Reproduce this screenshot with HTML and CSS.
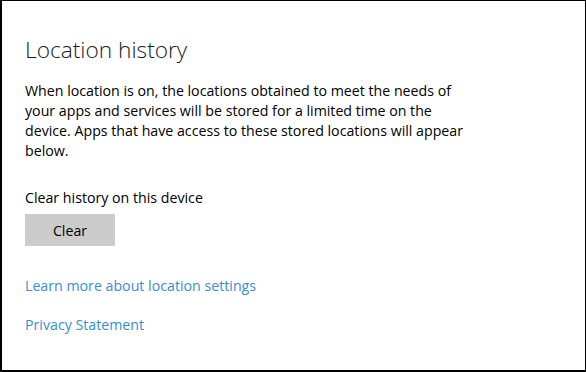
FILE: index.html
```html
<!DOCTYPE html>
<html>
<head>
<meta charset="utf-8">
<link rel="stylesheet" href="styles.css">
</head>
<body>
<div class="panel">
  <h1 class="title">Location history</h1>
  <p class="desc">When location is on, the locations obtained to meet the needs of<br>your apps and services will be stored for a limited time on the<br>device. Apps that have access to these stored locations will appear<br>below.</p>
  <div class="label">Clear history on this device</div>
  <button class="btn">Clear</button>
  <a class="link first" href="#">Learn more about location settings</a>
  <a class="link" href="#">Privacy Statement</a>
</div>
</body>
</html>
```
FILE: styles.css
```css
html, body {
  margin: 0;
  padding: 0;
  background: #ffffff;
}
.panel {
  width: 586px;
  height: 372px;
  box-sizing: border-box;
  border-style: solid;
  border-color: #000;
  border-width: 1px 1px 2px 2px;
  padding: 0 0 0 23px;
  display: flex;
  flex-direction: column;
  align-items: flex-start;
  font-family: "Open Sans", "Noto Sans", sans-serif;
  color: #000;
}
.title {
  margin: 34px 0 0 0;
  font-size: 22.7px;
  font-weight: 300;
  line-height: 30px;
  color: #1a1a1a;
}
.desc {
  margin: 16px 0 0 0;
  font-size: 14.2px;
  line-height: 20px;
}
.label {
  margin: 27px 0 0 0;
  font-size: 14.2px;
  line-height: 20px;
}
.btn {
  margin: 6px 0 0 0;
  width: 90px;
  height: 32px;
  border: none;
  background: #cccccc;
  font-family: inherit;
  font-size: 14.2px;
  color: #000;
  padding: 0;
}
.link {
  font-size: 14.2px;
  line-height: 20px;
  color: #398dd2;
  text-decoration: none;
  margin-top: 19px;
}
.link.first {
  margin-top: 30px;
}
```
